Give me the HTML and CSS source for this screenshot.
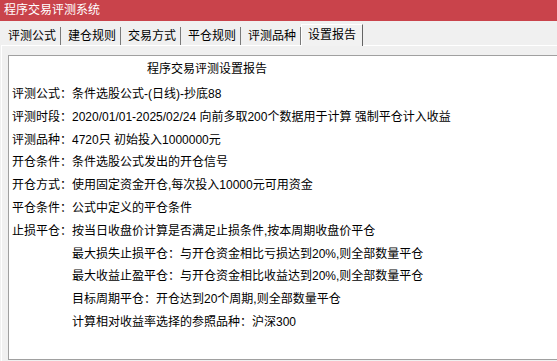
FILE: index.html
```html
<!DOCTYPE html>
<html lang="zh">
<head>
<meta charset="utf-8">
<title>程序交易评测系统</title>
<link rel="stylesheet" href="styles.css">
</head>
<body>
<div class="window">
  <div class="titlebar">程序交易评测系统</div>
  <div class="tabbar">
    <div class="tab">评测公式</div>
    <div class="tab">建仓规则</div>
    <div class="tab">交易方式</div>
    <div class="tab">平仓规则</div>
    <div class="tab">评测品种</div>
    <div class="tab active">设置报告</div>
  </div>
  <div class="page">
    <div class="memo">
      <div class="report-title">程序交易评测设置报告</div>
      <div class="line">评测公式：条件选股公式-(日线)-抄底88</div>
      <div class="line">评测时段：2020/01/01-2025/02/24 向前多取200个数据用于计算 强制平仓计入收益</div>
      <div class="line">评测品种：4720只 初始投入1000000元</div>
      <div class="line">开仓条件：条件选股公式发出的开仓信号</div>
      <div class="line">开仓方式：使用固定资金开仓,每次投入10000元可用资金</div>
      <div class="line">平仓条件：公式中定义的平仓条件</div>
      <div class="line">止损平仓：按当日收盘价计算是否满足止损条件,按本周期收盘价平仓</div>
      <div class="line sub">最大损失止损平仓：与开仓资金相比亏损达到20%,则全部数量平仓</div>
      <div class="line sub">最大收益止盈平仓：与开仓资金相比收益达到20%,则全部数量平仓</div>
      <div class="line sub">目标周期平仓：开仓达到20个周期,则全部数量平仓</div>
      <div class="line sub">计算相对收益率选择的参照品种：沪深300</div>
    </div>
  </div>
</div>
</body>
</html>
```

FILE: styles.css
```css
html, body {
  margin: 0;
  padding: 0;
}
body {
  width: 557px;
  height: 361px;
  overflow: hidden;
  background: #f0f0f0;
  font-family: "Liberation Sans", "Noto Sans CJK SC", sans-serif;
  font-size: 12px;
  color: #000;
}
.window {
  display: flex;
  flex-direction: column;
  height: 361px;
}
.titlebar {
  height: 21px;
  line-height: 21px;
  background: #c9434b;
  color: #fff;
  padding-left: 4px;
  white-space: nowrap;
}
.tabbar {
  display: flex;
  align-items: flex-end;
  height: 24px;
  padding-left: 1px;
}
.tab {
  height: 18px;
  line-height: 18px;
  padding: 0 4px 0 7px;
  border-right: 1px solid #7a7a7a;
  white-space: nowrap;
}
.tab.active {
  height: 21px;
  line-height: 20px;
  padding: 0 6px;
  border-left: 1px solid #fff;
  border-top: 1px solid #fff;
  border-right: 1px solid #646464;
  background: #f2f2f2;
  margin-bottom: -1px;
  position: relative;
}
.page {
  flex: 1;
  margin-left: 1px;
  border-left: 1px solid #fff;
  border-top: 1px solid #fff;
  padding: 9px 0 0 6px;
  overflow: hidden;
}
.memo {
  height: 305px;
  box-sizing: border-box;
  background: #fff;
  border: 1px solid #a0a0a0;
  border-right: none;
  padding: 2px 0 0 3px;
  overflow: hidden;
}
.report-title {
  line-height: 23px;
  padding-left: 135px;
  margin-bottom: 2px;
}
.line {
  line-height: 22.8px;
  white-space: nowrap;
}
.line.sub {
  padding-left: 60px;
}
```
